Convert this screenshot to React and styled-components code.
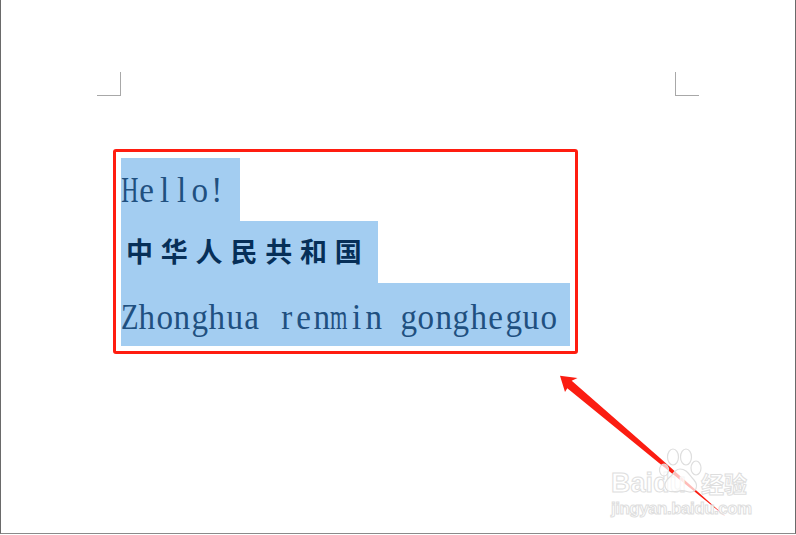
import React from "react";
import styled, { createGlobalStyle } from "styled-components";

const Global = createGlobalStyle`
  html, body { margin: 0; padding: 0; background: #fff; }
`;

const Page = styled.div`
  position: relative;
  box-sizing: border-box;
  width: 796px;
  height: 534px;
  overflow: hidden;
  background: #fff;
  border-left: 1px solid #6a6a6a;
  border-right: 1px solid #6a6a6a;
  border-bottom: 1px solid #8a8a8a;
`;

const Marks = styled.div`
  display: flex;
  justify-content: space-between;
  padding: 72px 96px 0;
`;

const Mark = styled.div`
  box-sizing: border-box;
  width: 24px;
  height: 24px;
  border-bottom: 1px solid #a8a8a8;
  border-left: ${(p) => (p.$side === "right" ? "1px solid #a8a8a8" : "none")};
  border-right: ${(p) => (p.$side === "left" ? "1px solid #a8a8a8" : "none")};
`;

const Frame = styled.div`
  box-sizing: border-box;
  width: 465px;
  height: 205px;
  margin: 53px 0 0 112px;
  padding: 6px 5px 5px;
  border: 3px solid #ff1d10;
  border-radius: 3px;
`;

const Line = styled.div`
  width: ${(p) => p.$w}px;
  height: ${(p) => p.$h}px;
  background: #a3cdf1;
  white-space: pre;
  overflow: hidden;
`;

const LatinText = styled.div`
  display: flex;
  height: 100%;
  align-items: flex-end;
  padding-bottom: ${(p) => p.$bottom}px;
  box-sizing: border-box;
  color: #1f5080;
  font-family: "Liberation Serif", serif;
  font-size: 36px;
  line-height: 36px;
`;

const Glyph = styled.span`
  display: inline-flex;
  justify-content: center;
  flex: 0 0 17.45px;
  width: 17.45px;
  transform: scaleX(${(p) => p.$sx});
`;

const HanText = styled.div`
  padding-left: 5px;
  color: #062f58;
  font-family: "Noto Sans CJK SC", sans-serif;
  font-weight: 700;
  font-size: 27px;
  line-height: 60px;
  letter-spacing: 7.8px;
`;

const Overlay = styled.svg`
  position: absolute;
  left: -1px;
  top: 0;
  pointer-events: none;
`;

const Watermark = styled.div`
  position: absolute;
  left: 610px;
  top: ${(p) => p.$top}px;
  display: flex;
  align-items: center;
  font-family: "Liberation Sans", sans-serif;
  font-weight: 700;
  font-size: ${(p) => p.$size}px;
  line-height: 1;
  letter-spacing: ${(p) => p.$space || 0}px;
  color: rgba(255, 255, 255, 0.7);
  -webkit-text-stroke: 1px #dedede;
  white-space: nowrap;
`;

const CnMark = styled.span`
  font-family: "Noto Sans CJK SC", sans-serif;
  font-size: 23px;
  margin-left: 15px;
`;

const squeeze = { H: 0.66, Z: 0.8, m: 0.62 };

function Latin({ text, bottom }) {
  return (
    <LatinText $bottom={bottom}>
      {[...text].map((c, i) => (
        <Glyph key={i} $sx={squeeze[c] || 0.92}>{c}</Glyph>
      ))}
    </LatinText>
  );
}

export default function App() {
  return (
    <Page>
      <Global />
      <Marks>
        <Mark $side="left" />
        <Mark $side="right" />
      </Marks>
      <Frame>
        <Line $w={119} $h={63}><Latin text="Hello!" bottom={13} /></Line>
        <Line $w={257} $h={62}><HanText>中华人民共和国</HanText></Line>
        <Line $w={449} $h={63}><Latin text="Zhonghua renmin gongheguo" bottom={11} /></Line>
      </Frame>
      <Overlay width="796" height="535" viewBox="0 0 796 535">
        <polygon fill="#fb1d12" points="560,375.7 577.5,378 571.7,380.7 660,458 725.7,516.7 659,463 567.3,388.3 565,392" />
      </Overlay>
      <Watermark $top={470} $size={27}>Baidu<CnMark>经验</CnMark></Watermark>
      <Watermark $top={500} $size={17} $space={-0.5}>jingyan.baidu.com</Watermark>
      <Overlay width="796" height="535" viewBox="0 0 796 535">
        <g fill="rgba(255,255,255,0.7)" stroke="#dedede" strokeWidth="1.2">
          <ellipse cx="673" cy="457" rx="5.5" ry="8" />
          <ellipse cx="686" cy="457" rx="5.5" ry="8" />
          <ellipse cx="696" cy="468" rx="5" ry="7" />
          <ellipse cx="664" cy="470" rx="4.5" ry="6" />
          <path d="M680 469c7 0 9 6 14 11 5 6 2 13-5 12-4-1-6-2-10-1-6 1-13 2-14-5-1-5 4-8 7-11 2-3 4-6 8-6z" />
        </g>
      </Overlay>
    </Page>
  );
}
